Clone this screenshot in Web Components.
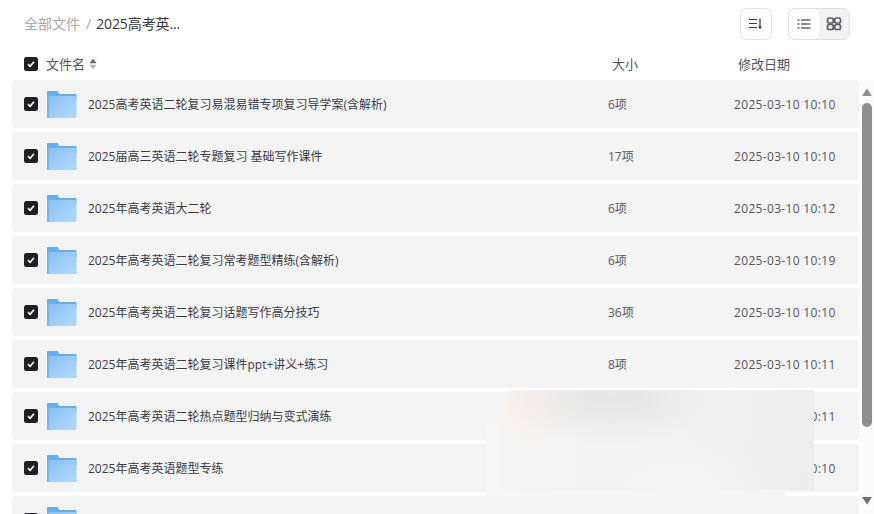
<!DOCTYPE html>
<html lang="zh"><head><meta charset="utf-8"><style>
html,body{margin:0;height:100%;background:#fff;overflow:hidden}
body{font-family:"Open Sans","Noto Sans CJK SC",sans-serif}
</style></head><body>
<file-page></file-page>
<script>
const FOLDER=`<svg width="30" height="30" viewBox="0 0 30 30"><defs><linearGradient id="g" x1="0" y1="0" x2="1" y2="1"><stop offset="0" stop-color="#86c1f6"/><stop offset="1" stop-color="#b4d9fb"/></linearGradient></defs><path d="M0 3.200C0 2.500.5 2 1.200 2h8.600c.5 0 .9.200 1.200.6L12.400 5H28.500c.6 0 1 .4 1 1v6H0z" fill="#66afee"/><path d="M0 7h29.500v21c0 .6-.4 1-1 1H1c-.6 0-1-.4-1-1z" fill="url(#g)"/><path d="M0 7v21c0 .6.400 1 1 1h.8V7z" fill="#6fb5f2"/><rect x="23" y="9" width="4" height="2" fill="#9accf7"/></svg>`;
class CheckBox extends HTMLElement{constructor(){super();this.attachShadow({mode:'open'}).innerHTML=`<style>:host{display:flex;width:14px;height:14px;background:#1f1f24;border-radius:2.500px;align-items:center;justify-content:center;flex:none}</style><svg width="10" height="10" viewBox="0 0 10 10"><path d="M2 5.200 4.100 7.300 8 2.800" fill="none" stroke="#fff" stroke-width="1.700"/></svg>`}}
customElements.define('check-box',CheckBox);
class FileRow extends HTMLElement{constructor(){super();this.attachShadow({mode:'open'}).innerHTML=`<style>
:host{display:flex;height:48px;flex:none;background:#f4f4f4;border-radius:4px;align-items:center;font-size:12px;color:#3b3b45}
check-box{margin-left:12px}svg{display:block}
.ic{margin-left:9px;margin-right:11px;width:30px;height:30px;flex:none}
.n{width:520px;white-space:nowrap;flex:none}.s{width:126px;flex:none;color:#54545e}.d{color:#54545e;white-space:nowrap;letter-spacing:.33px}
</style><check-box></check-box><div class="ic">${FOLDER}</div><div class="n"><slot></slot></div><div class="s">${this.getAttribute('size')}</div><div class="d">${this.getAttribute('date')}</div>`}}
customElements.define('file-row',FileRow);
class TopBar extends HTMLElement{constructor(){super();this.attachShadow({mode:'open'}).innerHTML=`<style>
:host{display:flex;align-items:center;height:48px;padding:0 24px;box-sizing:border-box;font-size:14px;flex:none}
.a{color:#a8a8ae;margin-top:-2px}.sep{color:#a8a8ae;margin:-2px 5px 0 6px}.b{color:#33333d;margin-top:-2px;letter-spacing:-.1px}
.sp{flex:1}
.btn{width:32px;height:32px;box-sizing:border-box;border:1px solid #e6e6e6;border-radius:7px;display:flex;align-items:center;justify-content:center;background:#fff}
.seg{margin-left:16px;width:62px;height:32px;box-sizing:border-box;border:1px solid #e2e2e2;border-radius:7px;background:#f2f2f2;display:flex}
.seg div{width:30px;display:flex;align-items:center;justify-content:center}
.seg .on{background:#fff;border-radius:6px}
</style><span class="a">全部文件</span><span class="sep">/</span><span class="b">2025高考英...</span><span class="sp"></span>
<div class="btn"><svg width="16" height="16" viewBox="0 0 16 16" fill="none" stroke="#3a3a44" stroke-width="1.100"><path d="M1 3.500h8M1 7.500h8M1 11.500h8"/><path d="M12 2.500v10" stroke-width="1.300"/><path d="M10 10.500h4L12 13z" fill="#3a3a44" stroke="none"/></svg></div>
<div class="seg"><div class="on"><svg width="14" height="14" viewBox="0 0 14 14" fill="none" stroke="#1a1a20" stroke-width="1.200"><path d="M4 3h9.500M4 7h9.500M4 11h9.500M.5 3h2M.5 7h2M.5 11h2"/></svg></div><div><svg width="16" height="16" viewBox="0 0 16 16" fill="none" stroke="#5c5c64" stroke-width="1.700"><rect x="1.500" y="2" width="5.800" height="5" rx="1.800"/><rect x="8.700" y="2" width="5.800" height="5" rx="1.800"/><rect x="1.500" y="8.500" width="5.800" height="5" rx="1.800"/><rect x="8.700" y="8.500" width="5.800" height="5" rx="1.800"/></svg></div></div>`}}
customElements.define('top-bar',TopBar);
class HeadRow extends HTMLElement{constructor(){super();this.attachShadow({mode:'open'}).innerHTML=`<style>
:host{display:flex;align-items:center;height:32px;box-sizing:border-box;padding-left:24px;font-size:13px;color:#54545e;flex:none}
.n{margin-left:8px;width:566px;display:flex;align-items:center;gap:4px}.s{width:126px}
.n,.s,.d{margin-top:-2px}
.n svg{margin-top:2px}
svg{display:block}
</style><check-box></check-box><div class="n">文件名<svg width="8" height="12" viewBox="0 0 8 12"><path d="M4 .8 7.600 5.200H.4z" fill="#66666e"/><path d="M4 11.200 7.600 6.800H.4z" fill="#b3b3b8"/></svg></div><div class="s">大小</div><div class="d">修改日期</div>`}}
customElements.define('head-row',HeadRow);
class ScrollTrack extends HTMLElement{constructor(){super();this.attachShadow({mode:'open'}).innerHTML=`<style>
:host{display:flex;flex-direction:column;align-items:flex-start;width:14px;height:434px;box-sizing:border-box;background:#fcfcfc;margin-left:1px;flex:none;padding:8px 0 0 2px}
.t{width:10px;height:324px;background:#8f8f8f;border-radius:5px;margin-top:7px;flex:none}
.sp{flex:1}svg{display:block;flex:none}
.d{margin-bottom:9px}
</style><svg width="10" height="8" viewBox="0 0 10 8"><path d="M5 .5 10 8H0z" fill="#8f8f8f"/></svg><div class="t"></div><div class="sp"></div><svg class="d" width="10" height="8" viewBox="0 0 10 8"><path d="M5 7.500 10 0H0z" fill="#6f6f6f"/></svg>`}}
customElements.define('scroll-track',ScrollTrack);
class BlurPatch extends HTMLElement{constructor(){super();this.attachShadow({mode:'open'}).innerHTML=`<style>
:host{position:absolute;left:486px;top:390px;width:328px;height:107px;pointer-events:none}
.a,.b{position:absolute}
.a{left:14px;top:0;width:314px;height:100px;clip-path:polygon(13px 0,100% 0,100% 100%,0 100%,0 5px);background:radial-gradient(ellipse 110px 48px at 112px 8px,#e5e5e5,rgba(232,232,232,0) 100%),radial-gradient(ellipse 60px 48px at 30px 14px,#f7f1ec,rgba(247,241,236,0) 100%),radial-gradient(ellipse 80px 50px at 187px 100px,#f6f6f6,rgba(246,246,246,0) 100%),linear-gradient(100deg,#f5f5f5 0%,#f2f2f2 55%,#ededed 100%)}
.b{left:0;top:35px;width:300px;height:72px;background:linear-gradient(90deg,#f6f6f6,#f5f5f5)}
</style><div class="b"></div><div class="a"></div>`}}
customElements.define('blur-patch',BlurPatch);
class FilePage extends HTMLElement{constructor(){super();
const rows=[['2025高考英语二轮复习易混易错专项复习导学案(含解析)','6项','2025-03-10 10:10'],['2025届高三英语二轮专题复习 基础写作课件','17项','2025-03-10 10:10'],['2025年高考英语大二轮','6项','2025-03-10 10:12'],['2025年高考英语二轮复习常考题型精练(含解析)','6项','2025-03-10 10:19'],['2025年高考英语二轮复习话题写作高分技巧','36项','2025-03-10 10:10'],['2025年高考英语二轮复习课件ppt+讲义+练习','8项','2025-03-10 10:11'],['2025年高考英语二轮热点题型归纳与变式演练','','2025-03-10 10:11'],['2025年高考英语题型专练','','2025-03-10 10:10'],['','','']];
this.attachShadow({mode:'open'}).innerHTML=`<style>
:host{display:flex;flex-direction:column;height:514px;width:874px;overflow:hidden;position:relative}
.body{display:flex;align-items:flex-start;flex:1;min-height:0}
.list{width:847px;margin-left:12px;display:flex;flex-direction:column;gap:4px;flex:none}
</style><top-bar></top-bar><head-row></head-row><div class="body"><div class="list">${rows.map(r=>`<file-row size="${r[1]}" date="${r[2]}">${r[0]}</file-row>`).join('')}</div><scroll-track></scroll-track></div><blur-patch></blur-patch>`}}
customElements.define('file-page',FilePage);
</script></body></html>
